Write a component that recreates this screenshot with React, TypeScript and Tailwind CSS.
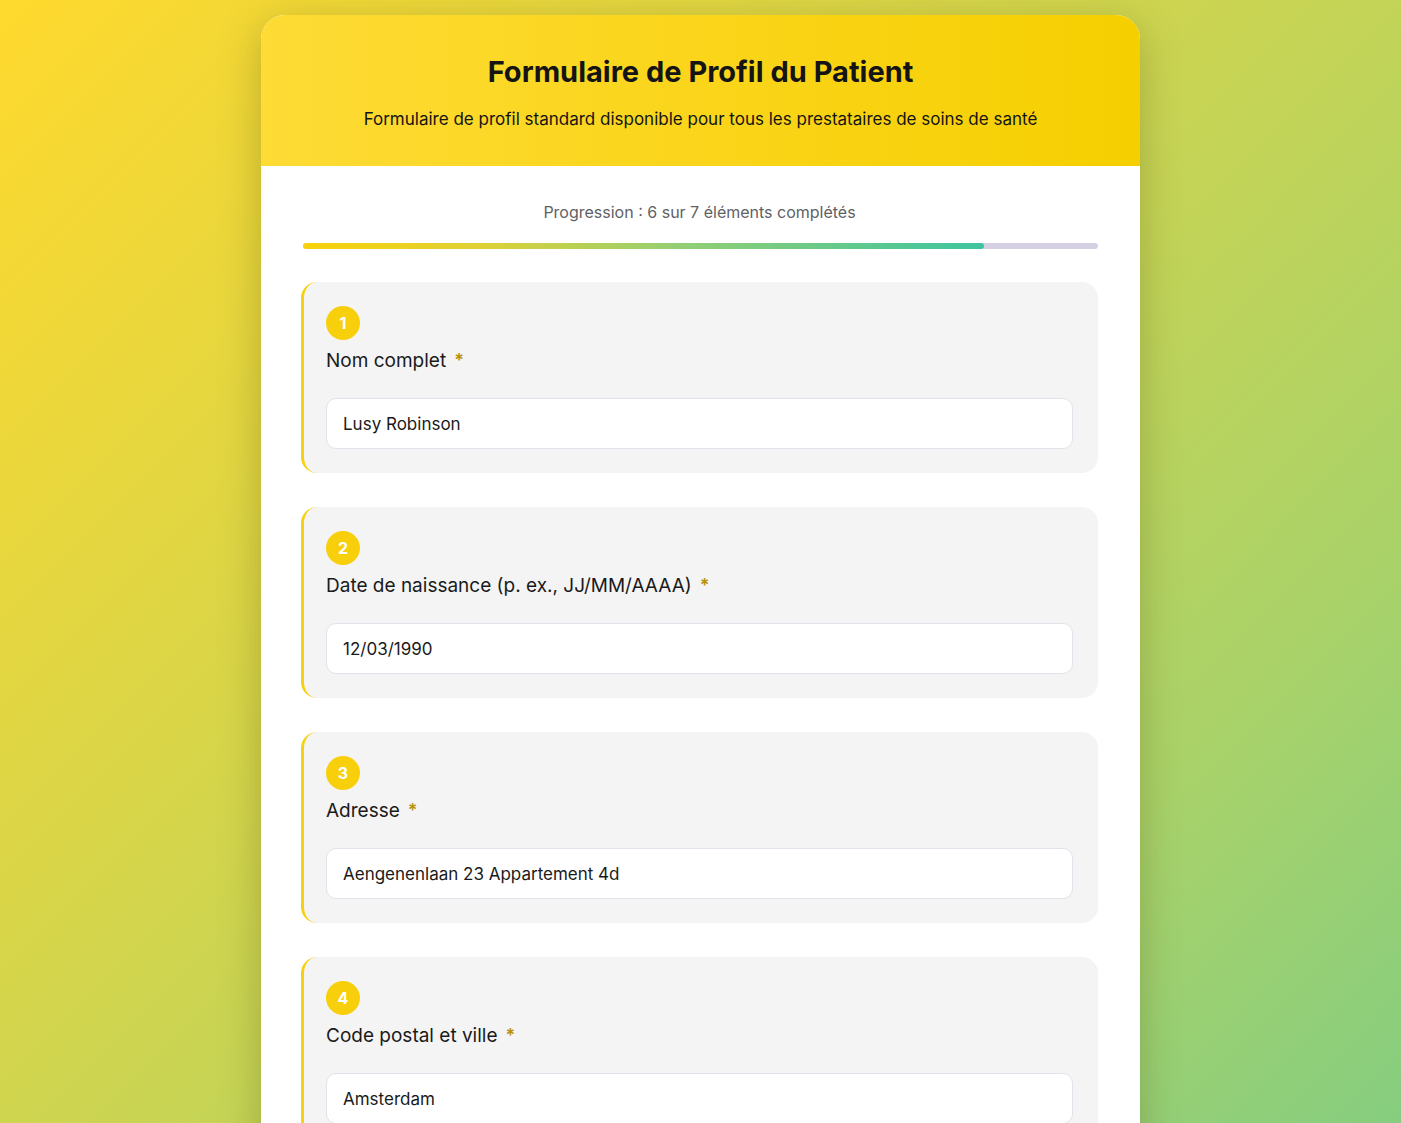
const fields = [
  { n: 1, label: "Nom complet", value: "Lusy Robinson" },
  { n: 2, label: "Date de naissance (p. ex., JJ/MM/AAAA)", value: "12/03/1990" },
  { n: 3, label: "Adresse", value: "Aengenenlaan 23 Appartement 4d" },
  { n: 4, label: "Code postal et ville", value: "Amsterdam" },
  { n: 5, label: "Numéro de téléphone", value: "+31 6 12345678" },
];

function Field({ n, label, value }: { n: number; label: string; value: string }) {
  return (
    <div className="rounded-2xl border-l-[3px] border-[#f7d10c] bg-[#f4f4f5] pt-6 pr-[25px] pb-6 pl-[22px]">
      <div className="flex h-[34px] w-[34px] items-center justify-center rounded-full bg-[#f8cf0b] text-[16px] font-bold text-white">
        {n}
      </div>
      <div className="mt-[7px] flex h-7 items-center text-[19px] leading-7 text-[#1a1a1a]">
        {label}
        <span className="ml-2 text-[18px] font-semibold text-[#b8900a]">*</span>
      </div>
      <input
        readOnly
        value={value}
        className="mt-[23px] block h-[51px] w-full rounded-[10px] border-[1.5px] border-[#dfe3ea] bg-white px-4 text-[17px] text-[#1a1a1a] outline-none"
      />
    </div>
  );
}

export default function App() {
  return (
    <div
      className="min-h-screen w-full bg-[linear-gradient(135deg,#ffd92d_0%,#d6d54a_35%,#a8d26a_70%,#74cb8b_100%)] pt-[15px]"
      style={{ fontFamily: "Inter, 'Noto Sans', sans-serif" }}
    >
      <div className="mx-auto w-[879px] overflow-hidden rounded-t-[24px] bg-white shadow-[0_10px_40px_rgba(90,90,20,0.35)]">
        <div className="flex h-[151px] flex-col items-center bg-[linear-gradient(90deg,#fedb35,#f6cf00)] pt-[38px]">
          <h1 className="text-[29px] font-bold leading-[38px] text-[#141414]">
            Formulaire de Profil du Patient
          </h1>
          <p className="mt-[16px] text-[17px] leading-6 text-[#141414]">
            Formulaire de profil standard disponible pour tous les prestataires de soins de santé
          </p>
        </div>
        <div className="pl-10 pr-[42px] pb-10 pt-[35px]">
          <p className="text-center text-[16px] leading-[22px] text-[#5f5f66]">
            Progression : 6 sur 7 éléments complétés
          </p>
          <div className="ml-[2px] mt-[20px] h-[6px] overflow-hidden rounded-full bg-[#d6d0e4]">
            <div
              className="h-full rounded-full bg-[linear-gradient(90deg,#f8d20a,#e1d133_25%,#93cf73_55%,#3cc4a0)]"
              style={{ width: `${(6 / 7) * 100}%` }}
            />
          </div>
          <div className="mt-[33px] flex flex-col gap-[34px]">
            {fields.map((f) => (
              <Field key={f.n} {...f} />
            ))}
          </div>
        </div>
      </div>
    </div>
  );
}
